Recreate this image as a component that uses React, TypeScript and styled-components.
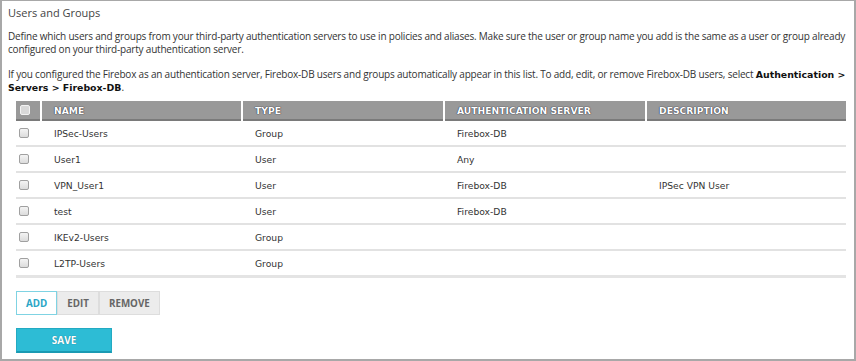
import React, { FC } from 'react';
import styled, { createGlobalStyle } from 'styled-components';

const GlobalStyle = createGlobalStyle`
  html, body {
    margin: 0;
    padding: 0;
    background: #ffffff;
  }
`;

const Frame = styled.div`
  box-sizing: border-box;
  width: 856px;
  height: 361px;
  border: 2px solid #a8a8a8;
  border-top-width: 1px;
  padding: 4px 6px 0 6px;
  font-family: "Open Sans", "Liberation Sans", sans-serif;
  font-size: 10px;
  letter-spacing: -0.2px;
  color: #333333;
  overflow: hidden;
`;

const Title = styled.div`
  font-size: 11px;
  letter-spacing: 0;
  line-height: 16px;
  color: #444444;
`;

const Paragraph = styled.p<{ top: number }>`
  margin: 0;
  line-height: 13px;
  margin-top: ${(p) => p.top}px;
`;

const Strong = styled.b`
  font-family: "DejaVu Sans", "Liberation Sans", sans-serif;
  font-size: 9.4px;
  line-height: 11px;
  letter-spacing: 0;
  color: #111111;
`;

const Table = styled.div`
  margin: 7px 2px 0 8px;
`;

const Row = styled.div<{ head?: boolean }>`
  display: grid;
  grid-template-columns: 24px 199px 200px 200px 199px;
  column-gap: 2px;
  height: ${(p) => (p.head ? '20px' : '24px')};
  align-items: center;
  border-bottom: ${(p) => (p.head ? '0' : '2px solid #e2e2e2')};
`;

const LastRow = styled(Row)`
  border-bottom: 3px solid #e4e4e4;
`;

const HeadCell = styled.div`
  box-sizing: border-box;
  height: 20px;
  background: #999999;
  border-bottom: 2px solid #7a7a7a;
  padding-left: 12px;
  display: flex;
  align-items: center;
  font-family: "DejaVu Sans", Verdana, sans-serif;
  font-weight: 700;
  font-size: 9.2px;
  letter-spacing: 0;
  color: #ffffff;
  text-shadow: 0 0 1px #223, 0 0 1px #334;
`;

const CheckCell = styled(HeadCell)`
  padding-left: 4px;
`;

const Cell = styled.div`
  padding-left: 12px;
  font-family: "DejaVu Sans", Verdana, sans-serif;
  font-size: 9.2px;
  letter-spacing: 0;
  color: #333333;
  white-space: nowrap;
`;

const BoxCell = styled.div`
  padding-left: 3px;
  display: flex;
  align-items: center;
`;

const Check = styled.span<{ light?: boolean }>`
  box-sizing: border-box;
  display: inline-block;
  width: 10px;
  height: 10px;
  border-radius: 2px;
  border: 1px solid ${(p) => (p.light ? '#f2f2f2' : '#a0a0a0')};
  background: ${(p) => (p.light ? '#d8d8d8' : 'linear-gradient(#f4f4f4, #dcdcdc)')};
`;

const ButtonGroup = styled.div`
  display: flex;
  margin: 13px 0 0 8px;
`;

const GroupButton = styled.button<{ active?: boolean }>`
  box-sizing: border-box;
  height: 24px;
  padding: 0 9px;
  margin: 0;
  border: 1px solid ${(p) => (p.active ? '#7fd3e3' : '#dddddd')};
  background: ${(p) => (p.active ? '#ffffff' : '#ececec')};
  color: ${(p) => (p.active ? '#2aa6c6' : '#666666')};
  font-family: "Open Sans", "Liberation Sans", sans-serif;
  font-weight: 700;
  font-size: 9.8px;
  letter-spacing: 0;
  cursor: pointer;
`;

const SaveButton = styled.button`
  box-sizing: border-box;
  display: block;
  width: 96px;
  height: 25px;
  margin: 13px 0 0 8px;
  border: 1px solid #23aac2;
  border-bottom: 2px solid #1b9ab3;
  background: #2dbcd5;
  color: #ffffff;
  font-family: "Open Sans", "Liberation Sans", sans-serif;
  font-weight: 700;
  font-size: 10px;
  text-shadow: 0 0 1px #0d6a80;
  cursor: pointer;
`;

interface Entry {
  name: string;
  type: string;
  server: string;
  description: string;
}

const entries: Entry[] = [
  { name: 'IPSec-Users', type: 'Group', server: 'Firebox-DB', description: '' },
  { name: 'User1', type: 'User', server: 'Any', description: '' },
  { name: 'VPN_User1', type: 'User', server: 'Firebox-DB', description: 'IPSec VPN User' },
  { name: 'test', type: 'User', server: 'Firebox-DB', description: '' },
  { name: 'IKEv2-Users', type: 'Group', server: '', description: '' },
  { name: 'L2TP-Users', type: 'Group', server: '', description: '' },
];

const App: FC = () => {
  return (
    <>
      <GlobalStyle />
      <Frame>
        <Title>Users and Groups</Title>
        <Paragraph top={9}>
          Define which users and groups from your third-party authentication servers to use in policies and aliases. Make sure the user or group name you add is the same as a user or group already configured on your third-party authentication server.
        </Paragraph>
        <Paragraph top={12}>
          If you configured the Firebox as an authentication server, Firebox-DB users and groups automatically appear in this list. To add, edit, or remove Firebox-DB users, select <Strong>Authentication &gt; Servers &gt; Firebox-DB</Strong>.
        </Paragraph>
        <Table>
          <Row head>
            <CheckCell><Check light /></CheckCell>
            <HeadCell>NAME</HeadCell>
            <HeadCell>TYPE</HeadCell>
            <HeadCell>AUTHENTICATION SERVER</HeadCell>
            <HeadCell>DESCRIPTION</HeadCell>
          </Row>
          {entries.map((entry, i) => {
            const R = i === entries.length - 1 ? LastRow : Row;
            return (
              <R key={entry.name}>
                <BoxCell><Check /></BoxCell>
                <Cell>{entry.name}</Cell>
                <Cell>{entry.type}</Cell>
                <Cell>{entry.server}</Cell>
                <Cell>{entry.description}</Cell>
              </R>
            );
          })}
        </Table>
        <ButtonGroup>
          <GroupButton active>ADD</GroupButton>
          <GroupButton>EDIT</GroupButton>
          <GroupButton>REMOVE</GroupButton>
        </ButtonGroup>
        <SaveButton>SAVE</SaveButton>
      </Frame>
    </>
  );
};

export default App;
